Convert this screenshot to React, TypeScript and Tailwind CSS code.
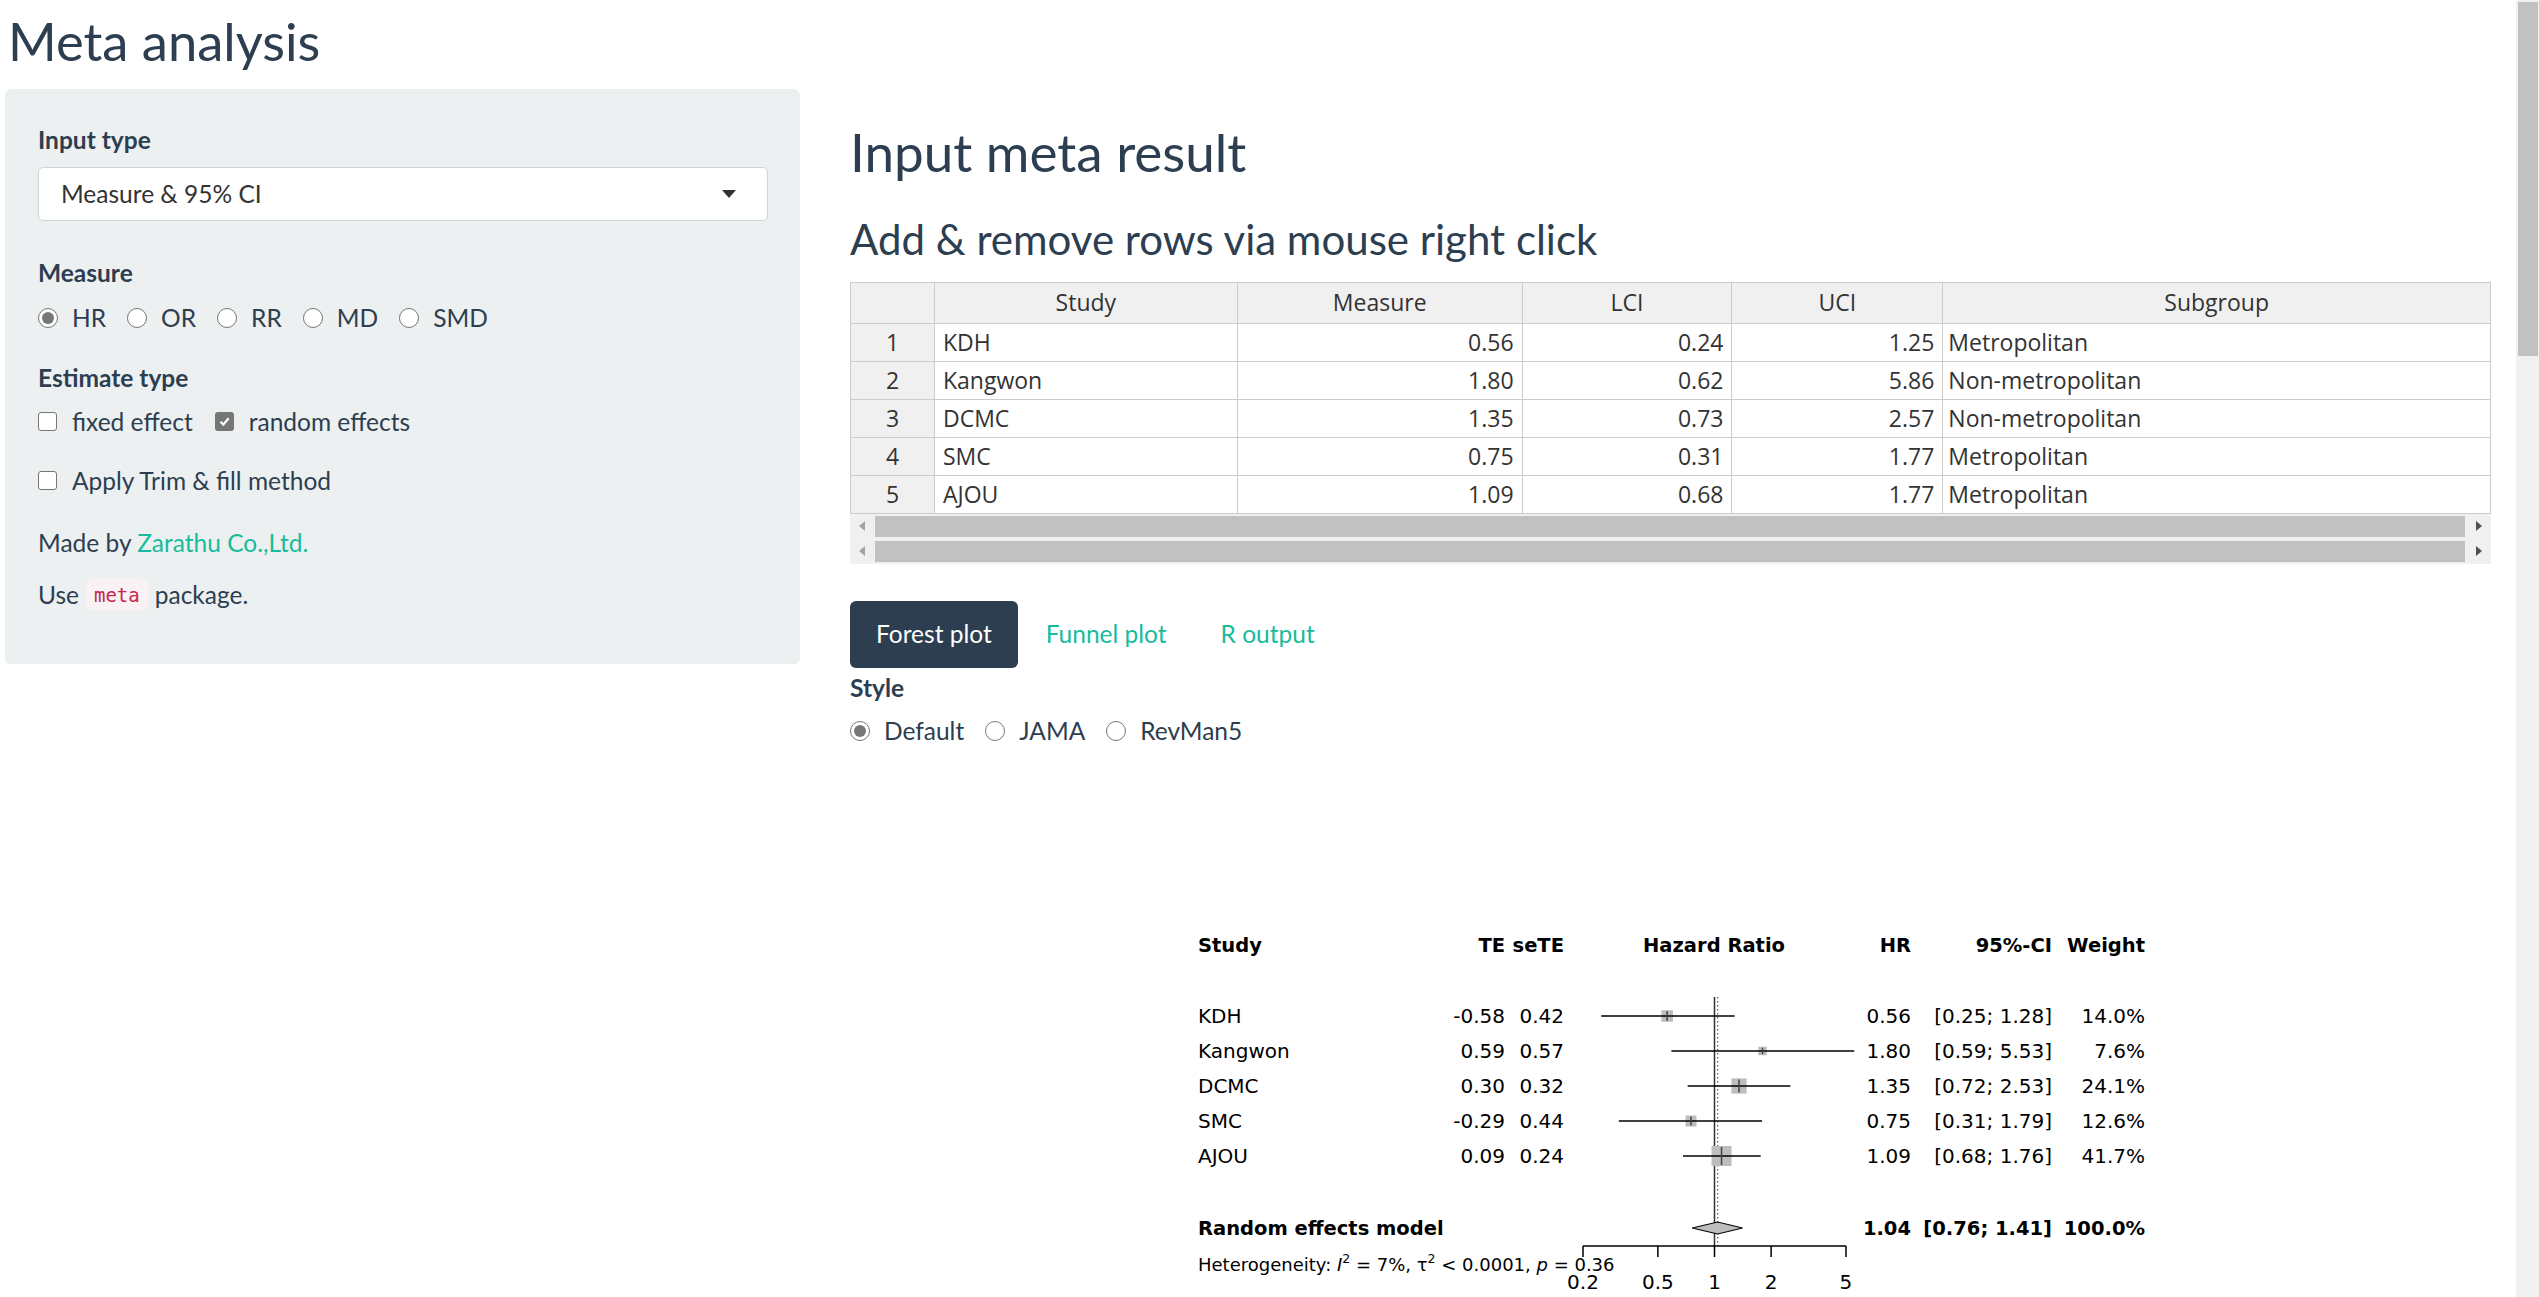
import { FC } from "react";

type Study = {
  name: string;
  te: string;
  se: string;
  hr: number;
  lo: number;
  hi: number;
  ci: string;
  weight: number;
};

const rows = [
  { id: 1, study: "KDH", measure: "0.56", lci: "0.24", uci: "1.25", subgroup: "Metropolitan" },
  { id: 2, study: "Kangwon", measure: "1.80", lci: "0.62", uci: "5.86", subgroup: "Non-metropolitan" },
  { id: 3, study: "DCMC", measure: "1.35", lci: "0.73", uci: "2.57", subgroup: "Non-metropolitan" },
  { id: 4, study: "SMC", measure: "0.75", lci: "0.31", uci: "1.77", subgroup: "Metropolitan" },
  { id: 5, study: "AJOU", measure: "1.09", lci: "0.68", uci: "1.77", subgroup: "Metropolitan" },
];

const studies: Study[] = [
  { name: "KDH", te: "-0.58", se: "0.42", hr: 0.56, lo: 0.25, hi: 1.28, ci: "[0.25; 1.28]", weight: 14.0 },
  { name: "Kangwon", te: "0.59", se: "0.57", hr: 1.8, lo: 0.59, hi: 5.53, ci: "[0.59; 5.53]", weight: 7.6 },
  { name: "DCMC", te: "0.30", se: "0.32", hr: 1.35, lo: 0.72, hi: 2.53, ci: "[0.72; 2.53]", weight: 24.1 },
  { name: "SMC", te: "-0.29", se: "0.44", hr: 0.75, lo: 0.31, hi: 1.79, ci: "[0.31; 1.79]", weight: 12.6 },
  { name: "AJOU", te: "0.09", se: "0.24", hr: 1.09, lo: 0.68, hi: 1.76, ci: "[0.68; 1.76]", weight: 41.7 },
];

const Radio: FC<{ checked?: boolean }> = ({ checked }) => (
  <span className="flex h-[20px] w-[20px] shrink-0 items-center justify-center rounded-full border-[1.5px] border-[#767676] bg-white">
    {checked && <span className="h-[12px] w-[12px] rounded-full bg-[#767676]" />}
  </span>
);

const Checkbox: FC<{ checked?: boolean }> = ({ checked }) =>
  checked ? (
    <span className="flex h-[19px] w-[19px] shrink-0 items-center justify-center rounded-[3px] bg-[#767676]">
      <svg width="13" height="13" viewBox="0 0 13 13">
        <path d="M2.5 6.8 L5.3 9.6 L10.6 3.2" fill="none" stroke="#fff" strokeWidth="2.2" />
      </svg>
    </span>
  ) : (
    <span className="h-[19px] w-[19px] shrink-0 rounded-[3px] border-[1.5px] border-[#767676] bg-white" />
  );

const RadioItem: FC<{ label: string; checked?: boolean }> = ({ label, checked }) => (
  <span className="flex items-center">
    <Radio checked={checked} />
    <span className="ml-[14px]">{label}</span>
  </span>
);

const CheckItem: FC<{ label: string; checked?: boolean }> = ({ label, checked }) => (
  <span className="flex items-center">
    <Checkbox checked={checked} />
    <span className="ml-[15px]">{label}</span>
  </span>
);

const Sidebar: FC = () => (
  <aside className="ml-[5px] h-[575px] w-[795px] shrink-0 rounded-[6px] bg-[#ecf0f1] pl-[33px] pr-[32px] pt-[33px] text-[24.5px] leading-[36px]">
    <div className="font-bold">Input type</div>
    <div className="mt-[9px] flex h-[54px] items-center justify-between rounded-[5px] border border-[#cfd4d6] bg-white pl-[22px] pr-[31px] text-[#333]">
      <span>Measure &amp; 95% CI</span>
      <span className="h-0 w-0 border-x-[7px] border-t-[8px] border-x-transparent border-t-[#333]" />
    </div>

    <div className="mt-[34px] font-bold">Measure</div>
    <div className="mt-[9px] flex gap-[21px]">
      <RadioItem label="HR" checked />
      <RadioItem label="OR" />
      <RadioItem label="RR" />
      <RadioItem label="MD" />
      <RadioItem label="SMD" />
    </div>

    <div className="mt-[24px] font-bold">Estimate type</div>
    <div className="mt-[8px] flex gap-[22px]">
      <CheckItem label="fixed effect" />
      <CheckItem label="random effects" checked />
    </div>
    <div className="mt-[23px] flex">
      <CheckItem label="Apply Trim & fill method" />
    </div>

    <p className="mt-[26px]">
      Made by <span className="text-[#18bc9c]">Zarathu Co.,Ltd.</span>
    </p>
    <p className="mt-[16px] flex items-center">
      Use
      <code className="mx-[7px] flex h-[32px] items-center rounded-[6px] bg-[#f9f2f4] px-[8px] font-['DejaVu_Sans_Mono',monospace] text-[19px] text-[#c7254e]">
        meta
      </code>
      package.
    </p>
  </aside>
);

const colWidths = ["w-[84px]", "w-[303px]", "w-[285px]", "w-[210px]", "w-[211px]", "w-[548px]"];

const DataTable: FC = () => (
  <div className="mt-[22px] w-[1641px] font-['Open_Sans',sans-serif] text-[23px] text-[#333]">
    <div className="flex h-[42px] border-y border-l border-[#ccc] bg-[#f0f0f0]">
      {["", "Study", "Measure", "LCI", "UCI", "Subgroup"].map((h, i) => (
        <div key={i} className={`${colWidths[i]} flex items-center justify-center border-r border-[#ccc]`}>
          {h}
        </div>
      ))}
    </div>
    {rows.map((r) => (
      <div key={r.id} className="flex h-[38px] border-b border-l border-[#ccc]">
        <div className="flex w-[84px] items-center justify-center border-r border-[#ccc] bg-[#f0f0f0]">{r.id}</div>
        <div className="flex w-[303px] items-center border-r border-[#ccc] px-[8px]">{r.study}</div>
        <div className="flex w-[285px] items-center justify-end border-r border-[#ccc] px-[8px]">{r.measure}</div>
        <div className="flex w-[210px] items-center justify-end border-r border-[#ccc] px-[8px]">{r.lci}</div>
        <div className="flex w-[211px] items-center justify-end border-r border-[#ccc] px-[8px]">{r.uci}</div>
        <div className="flex w-[548px] items-center border-r border-[#ccc] px-[5px]">{r.subgroup}</div>
      </div>
    ))}
    {[0, 1].map((k) => (
      <div key={k} className="flex h-[25px] items-center bg-[#f0f0f0]">
        <span className="ml-[9px] h-0 w-0 border-y-[5px] border-r-[6px] border-y-transparent border-r-[#a3a3a3]" />
        <span className="ml-[10px] h-[21px] flex-1 bg-[#c1c1c1]" />
        <span className="ml-[11px] mr-[9px] h-0 w-0 border-y-[5px] border-l-[6px] border-y-transparent border-l-[#505050]" />
      </div>
    ))}
  </div>
);

const X0 = 864.5;
const K = 81.7;
const xs = (v: number) => X0 + Math.log(v) * K;

const ForestPlot: FC = () => {
  const rowY = (i: number) => 256 + i * 35;
  const diamondY = 468;
  const axisY = 486;
  const ticks = [0.2, 0.5, 1, 2, 5];
  return (
    <svg width="1641" height="560" className="mt-[11px] block" fontFamily="'DejaVu Sans', sans-serif">
      <g fontSize="19.5" fontWeight="bold" fill="#000">
        <text x="348" y="192">Study</text>
        <text x="655" y="192" textAnchor="end">TE</text>
        <text x="714" y="192" textAnchor="end">seTE</text>
        <text x="864" y="192" textAnchor="middle">Hazard Ratio</text>
        <text x="1061" y="192" textAnchor="end">HR</text>
        <text x="1202" y="192" textAnchor="end">95%-CI</text>
        <text x="1295" y="192" textAnchor="end">Weight</text>
      </g>

      <line x1={X0} y1="237" x2={X0} y2={axisY} stroke="#333" strokeWidth="1.5" />
      <line x1={xs(1.04)} y1="237" x2={xs(1.04)} y2={axisY} stroke="#555" strokeWidth="1.2" strokeDasharray="1.5 2.5" />

      {studies.map((s, i) => {
        const y = rowY(i);
        const side = 20 * Math.sqrt(s.weight / 41.7);
        const cx = xs(s.hr);
        return (
          <g key={s.name}>
            <rect x={cx - side / 2} y={y - side / 2} width={side} height={side} fill="#bdbdbd" />
            <line x1={xs(s.lo)} y1={y} x2={xs(s.hi)} y2={y} stroke="#000" strokeWidth="1.5" />
            <line x1={cx} y1={y - side / 2 + 1} x2={cx} y2={y + side / 2 - 1} stroke="#444" strokeWidth="1.5" />
            <g fontSize="20" fill="#000">
              <text x="348" y={y + 7}>{s.name}</text>
              <text x="655" y={y + 7} textAnchor="end">{s.te}</text>
              <text x="714" y={y + 7} textAnchor="end">{s.se}</text>
              <text x="1061" y={y + 7} textAnchor="end">{s.hr.toFixed(2)}</text>
              <text x="1202" y={y + 7} textAnchor="end">{s.ci}</text>
              <text x="1295" y={y + 7} textAnchor="end">{s.weight.toFixed(1)}%</text>
            </g>
          </g>
        );
      })}

      <polygon
        points={`${xs(0.76)},${diamondY} ${xs(1.04)},${diamondY - 6} ${xs(1.41)},${diamondY} ${xs(1.04)},${diamondY + 6}`}
        fill="#bdbdbd"
        stroke="#000"
        strokeWidth="1.2"
      />
      <g fontSize="19.5" fontWeight="bold" fill="#000">
        <text x="348" y={diamondY + 7}>Random effects model</text>
        <text x="1061" y={diamondY + 7} textAnchor="end">1.04</text>
        <text x="1202" y={diamondY + 7} textAnchor="end">[0.76; 1.41]</text>
        <text x="1295" y={diamondY + 7} textAnchor="end">100.0%</text>
      </g>

      <text x="348" y="511" fontSize="18" fill="#000">
        Heterogeneity: <tspan fontStyle="italic">I</tspan>
        <tspan fontSize="12.5" dy="-8">2</tspan>
        <tspan dy="8"> = 7%, τ</tspan>
        <tspan fontSize="12.5" dy="-8">2</tspan>
        <tspan dy="8"> &lt; 0.0001, </tspan>
        <tspan fontStyle="italic">p</tspan> = 0.36
      </text>

      <line x1={xs(0.2)} y1={axisY} x2={xs(5)} y2={axisY} stroke="#000" strokeWidth="1.5" />
      {ticks.map((t) => (
        <g key={t}>
          <line x1={xs(t)} y1={axisY} x2={xs(t)} y2={axisY + 11} stroke="#000" strokeWidth="1.5" />
          <text x={xs(t)} y="529" fontSize="20" textAnchor="middle" fill="#000">
            {t}
          </text>
        </g>
      ))}
    </svg>
  );
};

const Main: FC = () => (
  <main className="ml-[50px] w-[1641px] shrink-0 pt-[36px]">
    <h2 className="text-[53px] leading-none">Input meta result</h2>
    <h3 className="mt-[40px] text-[42px] leading-none">Add &amp; remove rows via mouse right click</h3>
    <DataTable />

    <nav className="mt-[37px] flex gap-[2px] text-[24.5px]">
      <span className="flex h-[67px] items-center rounded-[6px] bg-[#2c3e50] px-[26px] text-white">Forest plot</span>
      <span className="flex h-[67px] items-center px-[26px] text-[#18bc9c]">Funnel plot</span>
      <span className="flex h-[67px] items-center px-[26px] text-[#18bc9c]">R output</span>
    </nav>
    <div className="mt-[2px] text-[24.5px] font-bold leading-[36px]">Style</div>
    <div className="mt-[7px] flex gap-[21px] text-[24.5px] leading-[36px]">
      <RadioItem label="Default" checked />
      <RadioItem label="JAMA" />
      <RadioItem label="RevMan5" />
    </div>

    <ForestPlot />
  </main>
);

const App: FC = () => {
  return (
    <div className="flex h-screen w-full overflow-hidden bg-white font-['Lato',sans-serif] text-[#2c3e50]">
      <div className="min-w-0 flex-1">
        <h2 className="ml-[8px] mt-[15px] text-[52.5px] leading-none">Meta analysis</h2>
        <div className="mt-[21px] flex">
          <Sidebar />
          <Main />
        </div>
      </div>
      <div className="w-[23px] shrink-0 bg-[#f1f1f1] pl-[2px] pr-[1px] pt-[2px]">
        <div className="h-[354px] bg-[#c1c1c1]" />
      </div>
    </div>
  );
};

export default App;
